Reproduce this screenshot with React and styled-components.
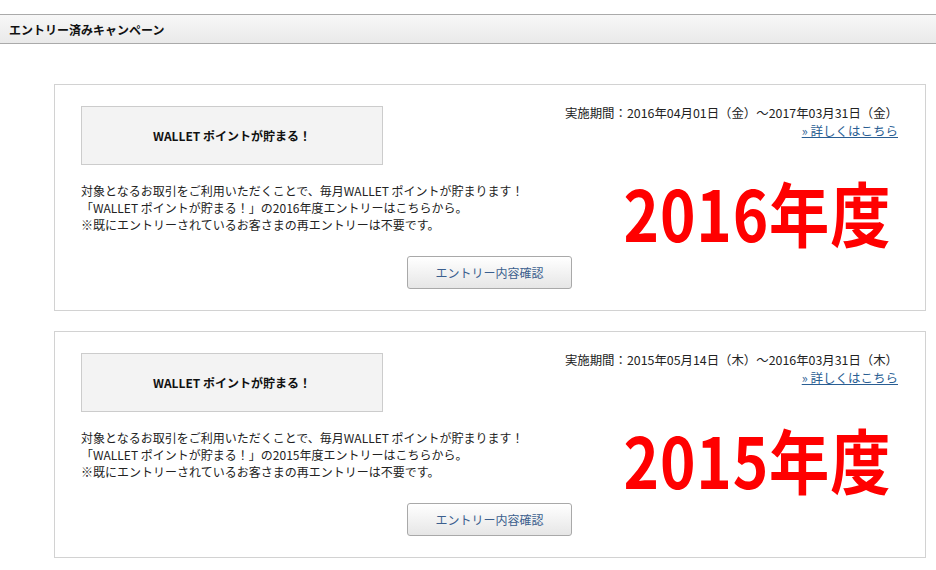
import React from 'react';
import styled, { createGlobalStyle } from 'styled-components';

const GlobalStyle = createGlobalStyle`
  body {
    margin: 0;
    background: #fff;
    font-family: "Noto Sans CJK JP", "Noto Sans", sans-serif;
    font-size: 12px;
    color: #222;
  }
`;

const Page = styled.div`
  padding-top: 14px;
`;

const HeaderBar = styled.div`
  height: 28px;
  border-top: 1px solid #aaa;
  border-bottom: 1px solid #aaa;
  background: linear-gradient(#f7f7f7, #e9e9e9);
  display: flex;
  align-items: center;
  padding-left: 9px;
  font-weight: bold;
  font-size: 12px;
  color: #111;
`;

const List = styled.div`
  display: flex;
  flex-direction: column;
  gap: 20px;
  margin: 40px 10px 0 54px;
`;

const Card = styled.div`
  border: 1px solid #d2d2d2;
  padding: 21px 27px 21px 26px;
  display: flex;
  flex-direction: column;
`;

const TopRow = styled.div`
  display: flex;
  justify-content: space-between;
`;

const LeftCol = styled.div`
  display: flex;
  flex-direction: column;
`;

const TitleBox = styled.div`
  width: 300px;
  height: 57px;
  background: #f3f3f3;
  border: 1px solid #ccc;
  display: flex;
  align-items: center;
  justify-content: center;
  font-weight: bold;
  font-size: 12px;
  color: #111;
`;

const Desc = styled.p`
  margin: 17px 0 0;
  line-height: 17px;
  font-size: 12px;
  color: #222;
`;

const RightCol = styled.div`
  display: flex;
  flex-direction: column;
  align-items: flex-end;
`;

const Period = styled.div`
  line-height: 17px;
  font-size: 12.4px;
  margin-right: 0;
  margin-top: -1px;
`;

const MoreLink = styled.a`
  color: #2a5e93;
  text-decoration: underline;
  line-height: 17px;
  font-size: 12.5px;
  cursor: pointer;
`;

const BigYear = styled.div`
  margin-top: 35px;
  color: #ff0000;
  font-family: "Noto Sans CJK JP", sans-serif;
  font-weight: 700;
  font-size: 70px;
  line-height: 76px;
  letter-spacing: 1px;
  transform: scaleX(0.86);
  transform-origin: right center;
  margin-right: 7px;
`;

const ButtonRow = styled.div`
  display: flex;
  justify-content: center;
  margin-top: 6px;
`;

const EntryButton = styled.button`
  width: 165px;
  height: 33px;
  border: 1px solid #a9a9a9;
  border-radius: 3px;
  background: linear-gradient(#ffffff, #e6e6e6);
  color: #3b5f8e;
  font-family: "Noto Sans CJK JP", sans-serif;
  font-size: 12px;
  cursor: pointer;
`;

const campaigns = [
  {
    period: '実施期間：2016年04月01日（金）～2017年03月31日（金）',
    year: '2016',
  },
  {
    period: '実施期間：2015年05月14日（木）～2016年03月31日（木）',
    year: '2015',
  },
];

const CampaignCard = ({ period, year }) => (
  <Card>
    <TopRow>
      <LeftCol>
        <TitleBox>WALLET ポイントが貯まる！</TitleBox>
        <Desc>
          対象となるお取引をご利用いただくことで、毎月WALLET ポイントが貯まります！<br />
          「WALLET ポイントが貯まる！」の{year}年度エントリーはこちらから。<br />
          ※既にエントリーされているお客さまの再エントリーは不要です。
        </Desc>
      </LeftCol>
      <RightCol>
        <Period>{period}</Period>
        <MoreLink>» 詳しくはこちら</MoreLink>
        <BigYear>{year}年度</BigYear>
      </RightCol>
    </TopRow>
    <ButtonRow>
      <EntryButton>エントリー内容確認</EntryButton>
    </ButtonRow>
  </Card>
);

export default function App() {
  return (
    <Page>
      <GlobalStyle />
      <HeaderBar>エントリー済みキャンペーン</HeaderBar>
      <List>
        {campaigns.map((c) => (
          <CampaignCard key={c.year} {...c} />
        ))}
      </List>
    </Page>
  );
}
